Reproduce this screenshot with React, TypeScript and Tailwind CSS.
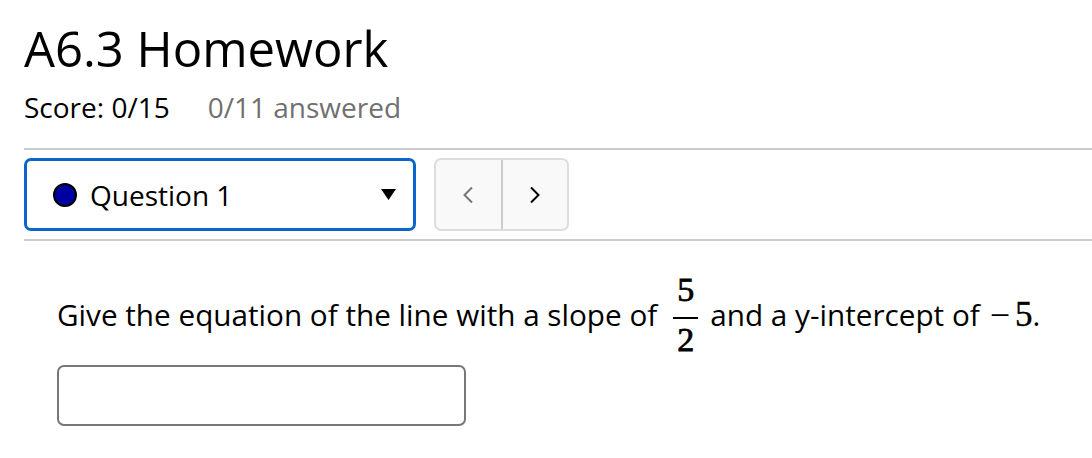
import React from 'react';

const App: React.FC = () => {
  return (
    <div className="min-h-screen bg-white pl-6 pt-5 text-black font-['Open_Sans',sans-serif]">
      <h1 className="text-[49px] leading-[56px] font-normal">A6.3 Homework</h1>

      <div className="mt-[13px] flex text-[28px] leading-[36px]">
        <span>Score: 0/15</span>
        <span className="ml-[38px] text-[#707070]">0/11 answered</span>
      </div>

      <div className="mt-[23px] border-t-2 border-[#cccccc]" />

      <div className="my-[8px] flex items-center">
        <div className="flex h-[73px] w-[392px] items-center rounded-[7px] border-[3px] border-[#0a66cc] pl-[26px] pr-[17px]">
          <span className="h-[24px] w-[24px] rounded-full border-2 border-black bg-[#0000a0]" />
          <span className="ml-[13px] text-[28px] leading-[36px]">Question 1</span>
          <svg className="ml-auto" width="15" height="11" viewBox="0 0 15 11">
            <polygon points="0,0 15,0 7.5,11" fill="#000" />
          </svg>
        </div>

        <div className="ml-[18px] flex h-[73px] w-[135px] overflow-hidden rounded-[7px] border-2 border-[#dddddd] bg-[#f9f9f9]">
          <button className="flex flex-1 items-center justify-center border-r-2 border-[#cccccc]">
            <svg width="12" height="18" viewBox="0 0 12 18">
              <polyline points="10,1.5 2.5,9 10,16.5" fill="none" stroke="#777" strokeWidth="2" />
            </svg>
          </button>
          <button className="flex flex-1 items-center justify-center">
            <svg width="12" height="18" viewBox="0 0 12 18">
              <polyline points="2,1.5 9.5,9 2,16.5" fill="none" stroke="#000" strokeWidth="2" />
            </svg>
          </button>
        </div>
      </div>

      <div className="border-t-2 border-[#cccccc]" />

      <div className="pl-[33px]">
        <div className="mt-[33px] flex items-center text-[29.7px] leading-[36px]">
          <span>Give the equation of the line with a slope of</span>
          <span className="ml-[16px] mr-[12px] flex flex-col items-center font-['Liberation_Serif',serif] text-[34px] leading-[32px] [-webkit-text-stroke:0.8px_black]">
            <span>5</span>
            <span className="mb-[5px] mt-[11px] h-[2px] w-[25px] bg-black" />
            <span>2</span>
          </span>
          <span>and a y-intercept of</span>
          <span className="ml-[10px] font-['Liberation_Serif',serif] text-[36px]">−</span>
          <span className="ml-[5px] font-['Liberation_Serif',serif] text-[35px] [-webkit-text-stroke:0.4px_black]">5</span>
          <span>.</span>
        </div>

        <input
          type="text"
          className="mt-[9px] h-[61px] w-[409px] rounded-[7px] border-2 border-[#777777] bg-white px-3 text-[28px] focus:outline-none"
        />
      </div>
    </div>
  );
};

export default App;
